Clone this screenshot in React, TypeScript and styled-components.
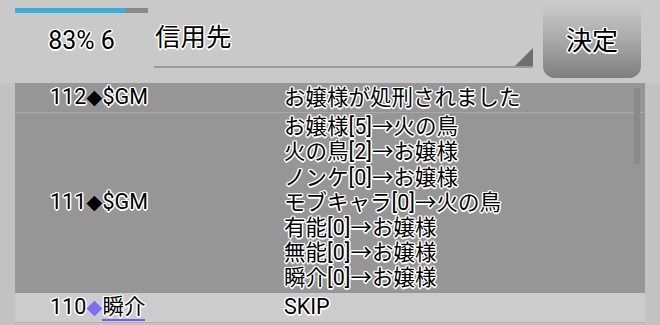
import React from 'react';
import styled, {createGlobalStyle} from 'styled-components';

const GlobalStyle = createGlobalStyle`
    html, body {
        margin: 0;
        padding: 0;
        background: #c9c9c9;
    }
    body {
        font-family: Roboto, "Noto Sans CJK JP", sans-serif;
        color: #000;
    }
`;

const outline = `
    text-shadow: -1px -1px 0 #fff, 1px -1px 0 #fff, -1px 1px 0 #fff, 1px 1px 0 #fff,
        0 -1.5px 0 #fff, 0 1.5px 0 #fff, -1.5px 0 0 #fff, 1.5px 0 0 #fff;
`;

const Screen = styled.div`
    width: 660px;
    height: 325px;
    overflow: hidden;
    display: flex;
    flex-direction: column;
`;

const Header = styled.div`
    display: flex;
    height: 83px;
    flex-shrink: 0;
`;

const StatusCol = styled.div`
    width: 133px;
    margin-left: 15px;
    padding-top: 8px;
    display: flex;
    flex-direction: column;
    align-items: center;
`;

const ProgressTrack = styled.div`
    width: 100%;
    height: 5px;
    background: #8a8a8a;
`;

const ProgressFill = styled.div`
    height: 100%;
    background: #3aaedc;
`;

const StatusText = styled.div`
    margin-top: 13px;
    font-size: 25px;
    line-height: 29px;
    ${outline}
`;

const SelectBox = styled.div`
    position: relative;
    width: 379px;
    height: 68px;
    margin-left: 6px;
    border-bottom: 2px solid #9a9a9a;
    padding: 23px 0 0 1px;
    box-sizing: border-box;
    font-size: 25.5px;
    line-height: 28px;
    ${outline}
`;

const SelectArrow = styled.div`
    position: absolute;
    right: 0;
    bottom: 0;
    width: 0;
    height: 0;
    border-left: 18px solid transparent;
    border-bottom: 18px solid #6e6e6e;
`;

const DecideButton = styled.button`
    margin: 2px 0 0 10px;
    width: 98px;
    height: 76px;
    border: none;
    border-radius: 12px;
    background: linear-gradient(to bottom, #cbcbcb 0%, #a9a9a9 50%, #7e7e7e 100%);
    font-family: Roboto, "Noto Sans CJK JP", sans-serif;
    font-size: 26px;
    color: #000;
    padding: 0 0 4px;
    ${outline}
`;

const ListArea = styled.div`
    position: relative;
    flex: 1;
    padding: 0 15px;
    background: #c2c2c2;
`;

const LogTable = styled.div`
    background: #969696;
`;

const Row = styled.div<{$light?: boolean; $border?: string}>`
    display: grid;
    grid-template-columns: 234px 1fr;
    align-items: center;
    padding: 1px 0 2px 35px;
    background: ${(p) => (p.$light ? '#cccccc' : '#969696')};
    border-bottom: ${(p) => (p.$border ? `1px solid ${p.$border}` : 'none')};
    font-size: 21.5px;
    line-height: 25.2px;
    ${outline}
`;

const NameCell = styled.div`
    white-space: nowrap;
`;

const MessageCell = styled.div`
    white-space: nowrap;
`;

const Diamond = styled.span<{$color: string}>`
    font-family: "DejaVu Sans", sans-serif;
    font-size: 21px;
    color: ${(p) => p.$color};
    text-shadow: 0 0 1px #fff;
`;

const PlayerName = styled.span`
    border-bottom: 2px solid #7b5cf2;
`;

const ScrollThumb = styled.div`
    position: absolute;
    top: 5px;
    right: 20px;
    width: 6px;
    height: 76px;
    border-radius: 2px;
    background: #8a8a8a;
`;

const votes = [
    'お嬢様[5]→火の鳥',
    '火の鳥[2]→お嬢様',
    'ノンケ[0]→お嬢様',
    'モブキャラ[0]→火の鳥',
    '有能[0]→お嬢様',
    '無能[0]→お嬢様',
    '瞬介[0]→お嬢様'
];

export default function App() {
    const progress = 83;
    return (
        <Screen>
            <GlobalStyle />
            <Header>
                <StatusCol>
                    <ProgressTrack>
                        <ProgressFill style={{width: `${progress}%`}} />
                    </ProgressTrack>
                    <StatusText>{progress}% 6</StatusText>
                </StatusCol>
                <SelectBox>
                    信用先
                    <SelectArrow />
                </SelectBox>
                <DecideButton>決定</DecideButton>
            </Header>
            <ListArea>
                <LogTable>
                    <Row $border="#a9a9a9">
                        <NameCell>
                            112<Diamond $color="#000">◆</Diamond>$GM
                        </NameCell>
                        <MessageCell>お嬢様が処刑されました</MessageCell>
                    </Row>
                    <Row>
                        <NameCell>
                            111<Diamond $color="#000">◆</Diamond>$GM
                        </NameCell>
                        <MessageCell>
                            {votes.map((v) => (
                                <div key={v}>{v}</div>
                            ))}
                        </MessageCell>
                    </Row>
                    <Row $light $border="#b5b5b5">
                        <NameCell>
                            110<Diamond $color="#7d6ff0">◆</Diamond>
                            <PlayerName>瞬介</PlayerName>
                        </NameCell>
                        <MessageCell>SKIP</MessageCell>
                    </Row>
                </LogTable>
                <ScrollThumb />
            </ListArea>
        </Screen>
    );
}
